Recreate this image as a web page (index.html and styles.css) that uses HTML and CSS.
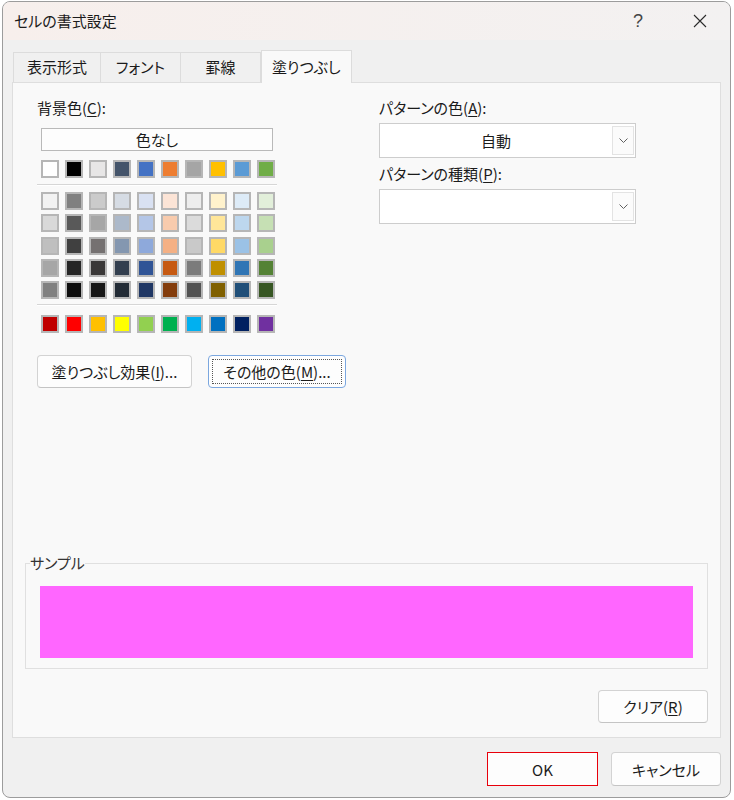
FILE: index.html
```html
<!DOCTYPE html>
<html lang="ja">
<head>
  <meta charset="UTF-8">
  <title>セルの書式設定</title>
  <link rel="stylesheet" href="styles.css">
</head>
<body>

  <div class="window">
    <div class="titlebar">
      <span class="title">セルの書式設定</span>
      <span class="help">?</span>
      <span class="close">
        <svg width="14" height="14" viewBox="0 0 14 14"><path d="M1 1 L13 13 M13 1 L1 13" stroke="#2b2b2b" stroke-width="1.1" fill="none"/></svg>
      </span>
    </div>

    <div class="tabs">
      <div class="tab">表示形式</div>
      <div class="tab">フォント</div>
      <div class="tab">罫線</div>
      <div class="tab active">塗りつぶし</div>
    </div>

    <div class="panel">
      <div class="columns">
        <div class="bg-col">
          <div class="label">背景色(<u>C</u>):</div>
          <div class="nocolor">色なし</div>
          <div class="swatches" id="themeRow"></div>
          <div class="divider"></div>
          <div class="swatch-grid" id="tintGrid"></div>
          <div class="divider"></div>
          <div class="swatches" id="standardRow"></div>
          <div class="btn-row">
            <button class="btn effects">塗りつぶし効果(<u>I</u>)...</button>
            <button class="btn more focused"><span class="focus-ring">その他の色(<u>M</u>)...</span></button>
          </div>
        </div>

        <div class="pattern-col">
          <div class="label">パターンの色(<u>A</u>):</div>
          <div class="select">
            <span class="select-value">自動</span>
            <span class="select-arrow">
              <svg width="9" height="5" viewBox="0 0 9 5"><polyline points="0.5,0.5 4.5,4.5 8.5,0.5" stroke="#606060" fill="none"/></svg>
            </span>
          </div>
          <div class="label second">パターンの種類(<u>P</u>):</div>
          <div class="select">
            <span class="select-value"></span>
            <span class="select-arrow">
              <svg width="9" height="5" viewBox="0 0 9 5"><polyline points="0.5,0.5 4.5,4.5 8.5,0.5" stroke="#606060" fill="none"/></svg>
            </span>
          </div>
        </div>
      </div>

      <fieldset class="sample">
        <legend>サンプル</legend>
        <div class="sample-fill"></div>
      </fieldset>

      <div class="clear-row">
        <button class="btn clear">クリア(<u>R</u>)</button>
      </div>
    </div>

    <div class="footer">
      <button class="btn ok">OK</button>
      <button class="btn cancel">キャンセル</button>
    </div>
  </div>

  <script>
    // Theme colours (top row)
    const themeColors = ['#ffffff', '#000000', '#e7e6e6', '#44546a', '#4472c4', '#ed7d31', '#a5a5a5', '#ffc000', '#5b9bd5', '#70ad47'];

    // Tints and shades, one array per row
    const tintRows = [
      ['#f2f2f2', '#808080', '#cbcbcb', '#d6dce4', '#d9e1f2', '#fce4d6', '#ededed', '#fff2cc', '#ddebf7', '#e2efda'],
      ['#d9d9d9', '#595959', '#a6a6a6', '#acb9ca', '#b4c6e7', '#f8cbad', '#dbdbdb', '#ffe699', '#bdd7ee', '#c6e0b4'],
      ['#bfbfbf', '#404040', '#757171', '#8497b0', '#8ea9db', '#f4b084', '#c9c9c9', '#ffd966', '#9bc2e6', '#a9d08e'],
      ['#a6a6a6', '#262626', '#3a3838', '#333f4f', '#305496', '#c65911', '#7b7b7b', '#bf8f00', '#2f75b5', '#548235'],
      ['#808080', '#0d0d0d', '#161616', '#222b35', '#203764', '#833c0c', '#525252', '#806000', '#1f4e78', '#375623']
    ];

    // Standard colours (bottom row)
    const standardColors = ['#c00000', '#ff0000', '#ffc000', '#ffff00', '#92d050', '#00b050', '#00b0f0', '#0070c0', '#002060', '#7030a0'];

    function makeSwatch(color) {
      const swatch = document.createElement('span');
      swatch.className = 'swatch';
      swatch.style.backgroundColor = color;
      return swatch;
    }

    function fill(id, colors) {
      const box = document.getElementById(id);
      colors.forEach(c => box.appendChild(makeSwatch(c)));
    }

    fill('themeRow', themeColors);
    fill('tintGrid', tintRows.flat());
    fill('standardRow', standardColors);
  </script>

</body>
</html>
```

FILE: styles.css
```css
* {
  box-sizing: border-box;
}

body {
  margin: 0;
  background-color: #ffffff;
  font-family: "Noto Sans CJK JP", "Noto Sans", sans-serif;
  font-size: 15px;
  color: #1b1b1b;
  font-feature-settings: "palt";
}

u {
  text-underline-offset: 2px;
}

.window {
  margin: 1px 3px 0 2px;
  height: 797px;
  border: 1px solid #9c9c9c;
  border-radius: 8px;
  background-color: #f0f0f0;
  overflow: hidden;
  display: flex;
  flex-direction: column;
}

/* title bar */
.titlebar {
  height: 38px;
  flex-shrink: 0;
  display: flex;
  align-items: center;
  padding-left: 11px;
  background: linear-gradient(90deg, #f7efec, #f3f1f1);
}

.title {
  font-size: 15px;
  flex: 1;
  line-height: 20px;
}

.help {
  width: 40px;
  text-align: center;
  font-size: 18px;
  color: #444;
  font-family: "Liberation Sans", sans-serif;
}

.close {
  width: 46px;
  margin-left: 19px;
  margin-right: 7px;
  display: flex;
  justify-content: center;
}

/* tabs */
.tabs {
  height: 42px;
  flex-shrink: 0;
  padding: 10px 0 0 10px;
  display: flex;
  align-items: flex-end;
}

.tab {
  height: 30px;
  min-width: 80px;
  padding: 0 12px;
  line-height: 28px;
  text-align: center;
  border: 1px solid #dcdcdc;
  border-left: none;
  border-bottom: none;
  background-color: #f0f0f0;
}

.tab:first-child {
  border-left: 1px solid #dcdcdc;
  min-width: 88px;
}

.tab.active {
  height: 33px;
  margin-bottom: -1px;
  padding: 0 10px;
  line-height: 31px;
  border-left: 1px solid #dcdcdc;
  background-color: #f9f9f9;
  position: relative;
  z-index: 1;
}

/* main panel */
.panel {
  height: 656px;
  flex-shrink: 0;
  margin: 0 9px;
  border: 1px solid #dedede;
  background-color: #f9f9f9;
  display: flex;
  flex-direction: column;
  padding: 15px 12px 14px 12px;
}

.columns {
  display: flex;
}

.bg-col {
  width: 240px;
  flex-shrink: 0;
  margin-left: 12px;
}

.label {
  line-height: 20px;
  height: 20px;
}

.nocolor {
  margin: 10px 4px 0;
  height: 23px;
  line-height: 21px;
  text-align: center;
  background-color: #fdfdfd;
  border: 1px solid #b9b9b9;
}

.swatches {
  display: flex;
  gap: 6px;
  padding-left: 4px;
  margin-top: 9px;
}

.swatch {
  display: block;
  width: 18px;
  height: 18px;
  border: 2px solid #b6b6b6;
}

.divider {
  margin-top: 6px;
  height: 2px;
  border-top: 1px solid #d6d6d6;
  border-bottom: 1px solid #ffffff;
}

.swatch-grid {
  display: grid;
  grid-template-columns: repeat(10, 18px);
  column-gap: 6px;
  row-gap: 4.25px;
  padding-left: 4px;
  margin-top: 6px;
}

.swatch-grid + .divider {
  margin-top: 5px;
}

.btn-row {
  display: flex;
  gap: 16px;
  margin-top: 22px;
}

.btn {
  flex-shrink: 0;
  white-space: nowrap;
  font-family: inherit;
  font-size: 15px;
  color: #1b1b1b;
  font-feature-settings: "palt";
  height: 33px;
  padding: 0 8px;
  background-color: #fdfdfd;
  border: 1px solid #d3d3d3;
  border-bottom-color: #c4c4c4;
  border-radius: 4px;
  cursor: pointer;
}

.btn:hover {
  background-color: #f5f5f5;
}

.effects {
  width: 155px;
}

.more {
  width: 138px;
  padding: 3px;
}

.focused {
  border-color: #7ba7df;
}

.focus-ring {
  display: block;
  height: 100%;
  line-height: 23px;
  border: 1px dotted #555;
}

/* pattern column */
.pattern-col {
  width: 257px;
  margin-left: 102px;
}

.select {
  margin-top: 5px;
  height: 35px;
  display: flex;
  background-color: #ffffff;
  border: 1px solid #cdcdcd;
}

.select-value {
  flex: 1;
  line-height: 33px;
  text-align: center;
}

.select-arrow {
  width: 22px;
  margin: 2px 1px 2px 0;
  border: 1px solid #e3e3e3;
  background-color: #fbfbfb;
  display: flex;
  align-items: center;
  justify-content: center;
}

.label.second {
  margin-top: 6px;
}

/* sample */
.sample {
  margin: auto 0 0 0;
  border: 1px solid #e0e0e0;
  padding: 0 14px 10px 4px;
}

.sample legend {
  padding: 0;
  line-height: 20px;
  color: #333;
}

.sample-fill {
  margin: 13px 0 0 10px;
  height: 72px;
  background-color: #ff66ff;
}

.clear-row {
  display: flex;
  justify-content: flex-end;
  margin-top: 21px;
}

.clear {
  width: 110px;
}

/* footer */
.footer {
  display: flex;
  justify-content: flex-end;
  gap: 13px;
  padding: 14px 9px 0 0;
}

.footer .btn {
  height: 34px;
}

.ok {
  width: 111px;
  border: 1px solid #e8000b;
  border-radius: 0;
}

.cancel {
  width: 110px;
}
```
